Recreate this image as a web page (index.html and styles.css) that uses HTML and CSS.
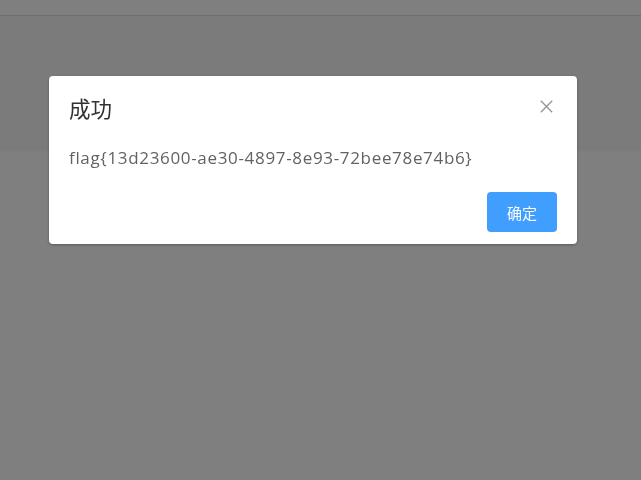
FILE: index.html
```html
<!DOCTYPE html>
<html lang="zh">
<head>
<meta charset="utf-8">
<title>成功</title>
<link rel="stylesheet" href="styles.css">
</head>
<body>
<div class="page">
  <div class="topbar"></div>
  <div class="panel"></div>
</div>
<div class="overlay">
  <div class="dialog" role="dialog">
    <div class="dialog-header">
      <span class="dialog-title">成功</span>
      <button class="dialog-close" aria-label="Close">
        <svg width="13" height="13" viewBox="0 0 13 13"><path d="M0.8 0.8 L12.2 12.2 M12.2 0.8 L0.8 12.2" stroke="#909399" stroke-width="1.3" fill="none"/></svg>
      </button>
    </div>
    <div class="dialog-body">flag{13d23600-ae30-4897-8e93-72bee78e74b6}</div>
    <div class="dialog-footer">
      <button class="btn-primary">确定</button>
    </div>
  </div>
</div>
</body>
</html>
```

FILE: styles.css
```css
html, body {
  margin: 0;
  padding: 0;
  height: 100%;
  background: #ffffff;
  font-family: "Noto Sans CJK SC", "Noto Sans", sans-serif;
}
.page {
  display: flex;
  flex-direction: column;
}
.topbar {
  height: 15px;
  border-bottom: 1px solid #dcdfe6;
  background: #ffffff;
}
.panel {
  height: 131px;
  background: #f7f7f7;
  box-shadow: 0 2px 4px rgba(0, 0, 0, 0.08);
}
.overlay {
  position: fixed;
  inset: 0;
  background: rgba(0, 0, 0, 0.5);
}
.dialog {
  position: absolute;
  left: 49px;
  top: 76px;
  width: 528px;
  background: #ffffff;
  border-radius: 4px;
  box-shadow: 0 1px 3px rgba(0, 0, 0, 0.3);
  box-sizing: border-box;
}
.dialog-header {
  position: relative;
  padding: 20px 20px 10px;
}
.dialog-title {
  display: block;
  font-size: 21.5px;
  line-height: 24px;
  color: #303133;
}
.dialog-close {
  position: absolute;
  top: 24px;
  right: 24px;
  width: 13px;
  height: 13px;
  padding: 0;
  border: 0;
  background: transparent;
  display: flex;
}
.dialog-body {
  padding: 17px 20px 13px;
  font-family: "Open Sans", "Noto Sans CJK SC", sans-serif;
  font-size: 17px;
  letter-spacing: 0.67px;
  line-height: 22px;
  color: #606266;
}
.dialog-footer {
  display: flex;
  justify-content: flex-end;
  padding: 10px 20px 12px;
}
.btn-primary {
  width: 70px;
  height: 40px;
  border: 0;
  border-radius: 4px;
  background: #409eff;
  color: #ffffff;
  font-family: "Noto Sans CJK SC", sans-serif;
  font-size: 15px;
  padding: 0;
}
```
